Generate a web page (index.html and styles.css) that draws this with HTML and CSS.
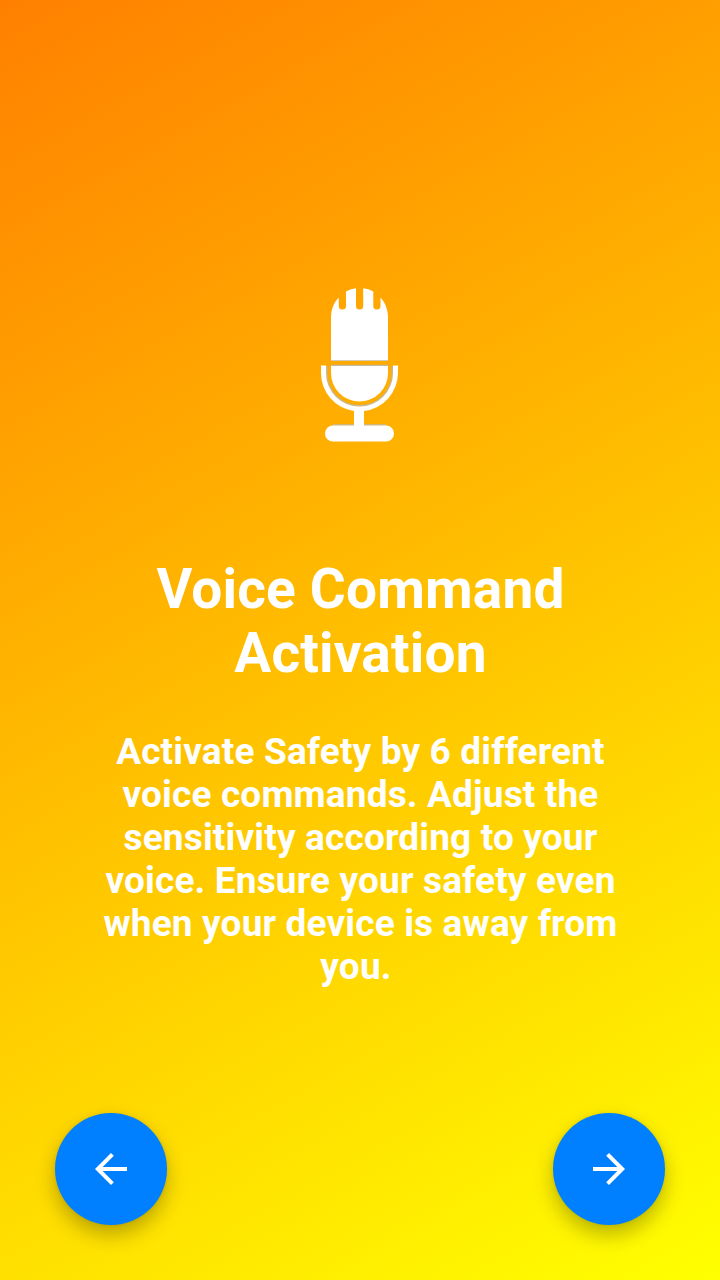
FILE: index.html
```html
<!DOCTYPE html>
<html lang="en">
<head>
<meta charset="utf-8">
<title>Voice Command Activation</title>
<link rel="stylesheet" href="styles.css">
</head>
<body>
<main class="screen">
  <svg class="mic" viewBox="0 0 80 156" aria-hidden="true">
    <g class="mic-shade">
      <path d="M6.700 79V86a32.800 32.800 0 0 0 65.600 0V79"/>
      <path d="M13 138H34M44 138H66M11 78.500H68M11 73.300H68"/>
    </g>
    <g class="mic-shape">
      <path d="M11 73.300V31C11 22 14 15.500 18.800 10.500V19a3.600 3.600 0 0 0 7.200 0V4.500Q31 1.800 36 1.300V19a3.600 3.600 0 0 0 7.200 0V1.300Q48.500 1.800 53.300 4.500V19a3.600 3.600 0 0 0 7.200 0V10.500C65 15.500 68 22 68 31V73.300Z"/>
      <path d="M11 79H68V86a28.500 28.500 0 0 1-57 0Z"/>
      <path d="M1 78.500H6V86a33.500 33.500 0 0 0 67 0V78.500H78V86A38.500 38.500 0 0 1 44 124V138.500H66a8 8 0 0 1 0 16H13a8 8 0 0 1 0-16H34V124A38.500 38.500 0 0 1 1 86Z"/>
    </g>
  </svg>
  <h1 class="title">Voice Command<br>Activation</h1>
  <p class="description">Activate Safety by 6 different<br>voice commands. Adjust the<br>sensitivity according to your<br>voice. Ensure your safety even<br>when your device is away from<br><span class="last-line">you.</span></p>
  <nav class="navigation">
    <button class="nav-button" aria-label="Previous"><svg class="arrow" viewBox="0 0 24 24"><path d="M20 11H7.830l5.590-5.590L12 4l-8 8 8 8 1.410-1.410L7.830 13H20z"/></svg></button>
    <button class="nav-button" aria-label="Next"><svg class="arrow" viewBox="0 0 24 24"><path d="M12 4l-1.410 1.410L16.170 11H4v2h12.170l-5.580 5.590L12 20l8-8z"/></svg></button>
  </nav>
</main>
</body>
</html>
```
FILE: styles.css
```css
* { box-sizing: border-box; }
body { margin: 0; font-family: Roboto, sans-serif; }
.screen {
  width: 720px;
  height: 1280px;
  padding: 287px 55px 55px;
  display: flex;
  flex-direction: column;
  align-items: center;
  color: #fff;
  background: linear-gradient(150.64deg, #ff8000, #ff0);
}
.mic { width: 80px; height: 156px; flex: none; }
.mic-shape { fill: #fff; }
.mic-shade { fill: none; stroke: #c4b8a0; stroke-width: 1.4; }
.title {
  margin: 114px 0 0;
  padding-left: 1px;
  font-size: 55px;
  line-height: 64px;
  letter-spacing: .18px;
  font-weight: 700;
  text-align: center;
  white-space: nowrap;
}
.description {
  margin: 45px 0 0;
  padding-left: 1px;
  font-size: 37px;
  line-height: 43px;
  letter-spacing: .15px;
  font-weight: 700;
  text-align: center;
  white-space: nowrap;
}
.last-line { padding-right: 9px; }
.navigation {
  width: 100%;
  margin-top: auto;
  display: flex;
  justify-content: space-between;
}
.nav-button {
  width: 112px;
  height: 112px;
  padding: 0;
  border: 0;
  border-radius: 50%;
  display: grid;
  place-items: center;
  background: #0080ff;
  box-shadow: 0 10px 20px rgba(0, 0, 0, .26), 0 0 4px rgba(0, 0, 0, .08);
}
.arrow { width: 48px; height: 48px; fill: #fff; }
```
